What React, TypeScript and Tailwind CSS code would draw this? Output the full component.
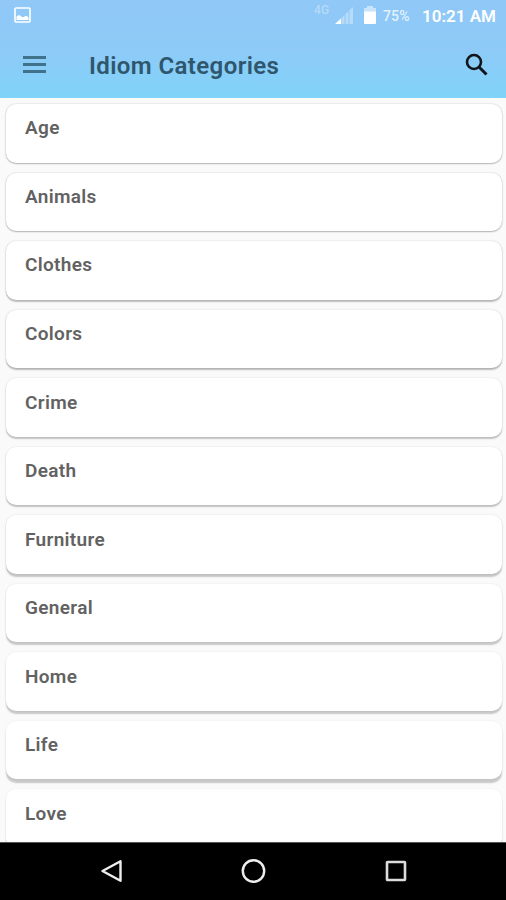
import clsx from "clsx";

const categories = [
  { name: "Age", shadow: "shadow-[0_1px_1.5px_rgba(0,0,0,0.24),0_0_2px_rgba(0,0,0,0.2)]" },
  { name: "Animals", shadow: "shadow-[0_1px_1.5px_rgba(0,0,0,0.25),0_0_2px_rgba(0,0,0,0.18)]" },
  { name: "Clothes", shadow: "shadow-[0_1.5px_1.5px_rgba(0,0,0,0.24),0_0_2px_rgba(0,0,0,0.17)]" },
  { name: "Colors", shadow: "shadow-[0_1.5px_1.5px_rgba(0,0,0,0.25),0_0_2px_rgba(0,0,0,0.15)]" },
  { name: "Crime", shadow: "shadow-[0_2px_1.5px_rgba(0,0,0,0.22),0_0_2px_rgba(0,0,0,0.14)]" },
  { name: "Death", shadow: "shadow-[0_2px_1.5px_rgba(0,0,0,0.22),0_0_2px_rgba(0,0,0,0.13)]" },
  { name: "Furniture", shadow: "shadow-[0_2.5px_1.5px_rgba(0,0,0,0.21),0_0_2px_rgba(0,0,0,0.12)]" },
  { name: "General", shadow: "shadow-[0_2.5px_1.5px_rgba(0,0,0,0.2),0_0_2px_rgba(0,0,0,0.1)]" },
  { name: "Home", shadow: "shadow-[0_3px_1.5px_rgba(0,0,0,0.2),0_0_2px_rgba(0,0,0,0.09)]" },
  { name: "Life", shadow: "shadow-[0_3.5px_1.5px_rgba(0,0,0,0.2),0_0_2px_rgba(0,0,0,0.08)]" },
  { name: "Love", shadow: "shadow-[0_3.5px_1.5px_rgba(0,0,0,0.2),0_0_2px_rgba(0,0,0,0.07)]" },
];

function StatusBar() {
  return (
    <div className="flex h-8 items-start justify-between pl-[14px] pr-[10px] text-white">
      <svg className="mt-[7px] h-4 w-[17px]" viewBox="0 0 17 16" fill="none">
        <rect x="1" y="1" width="15" height="14" rx="1" stroke="white" strokeWidth="1.6" />
        <path d="M2.5 13V9.5c2-1.5 3-1.8 4.5-.3 1.5 1.2 2.5 1.2 3.5.3 1.5-.8 2.5-.3 4 1V13z" fill="white" />
      </svg>
      <div className="flex items-start">
        <span className="mt-[3px] w-[21px] text-[12px] font-medium leading-[14px] text-white/35">4G</span>
        <svg className="mt-[7px] h-[17px] w-[18px]" viewBox="0 0 18 17">
          <path d="M0 17L6 11.5V17z" fill="white" />
          <path d="M6.5 17v-6l3-3v9zM10.5 17V7l3-3v13zM14.5 17V3L18 0v17z" fill="white" opacity="0.35" />
        </svg>
        <svg className="ml-[11px] mt-[6px] h-[18px] w-[12px]" viewBox="0 0 12 18">
          <path d="M3 0h6v2h3v4H0V2h3z" fill="white" opacity="0.5" />
          <path d="M0 5.5h12V17a1 1 0 0 1-1 1H1a1 1 0 0 1-1-1z" fill="white" />
        </svg>
        <span className="ml-[7px] mt-[7px] w-[39px] text-[14px] font-medium leading-[18px] tracking-[0.1px] text-white/75">
          75%
        </span>
        <span className="mt-[6px] text-[17px] font-semibold leading-5">10:21 AM</span>
      </div>
    </div>
  );
}

function Toolbar() {
  return (
    <div className="flex h-[66px] items-center pl-[23px] pr-[18px]">
      <button type="button" aria-label="Menu">
        <svg className="mb-[2px] h-[17px] w-[23px]" viewBox="0 0 23 17" fill="#40728b">
          <path d="M0 0h23v3H0zM0 7h23v3H0zM0 14h23v3H0z" />
        </svg>
      </button>
      <h1 className="ml-[43px] flex-1 pt-px text-[24px] font-semibold leading-8 tracking-[0.4px] text-[#2f566d]">
        Idiom Categories
      </h1>
      <button type="button" aria-label="Search">
        <svg className="mb-[2px] h-[23px] w-[23px]" viewBox="0 0 23 23" fill="none" stroke="#10161a">
          <circle cx="9" cy="9" r="7" strokeWidth="2.6" />
          <path d="M14 14l7.5 7.5" strokeWidth="3" />
        </svg>
      </button>
    </div>
  );
}

function NavBar() {
  return (
    <nav className="flex h-[58px] shrink-0 items-center border-t border-[#555] bg-black pb-[2px] pl-[100px] pr-[99px]">
      <div className="flex flex-1 items-center justify-between">
        <svg className="h-6 w-[23px]" viewBox="0 0 23 24" fill="none" stroke="#eee" strokeWidth="2.4">
          <path d="M20.5 2.2v19.6L2.5 12z" strokeLinejoin="round" />
        </svg>
        <svg className="h-[26px] w-[26px]" viewBox="0 0 26 26" fill="none" stroke="#eee" strokeWidth="2.4">
          <circle cx="12.5" cy="13" r="10.7" />
        </svg>
        <svg className="h-[22px] w-[22px]" viewBox="0 0 22 22" fill="none" stroke="#ddd" strokeWidth="2.6">
          <rect x="2" y="2" width="18" height="18" rx="0.5" />
        </svg>
      </div>
    </nav>
  );
}

export default function App() {
  return (
    <div className="flex h-[900px] w-[506px] flex-col overflow-hidden bg-[#fafafa] font-['Roboto',sans-serif]">
      <header className="h-[98px] shrink-0 bg-linear-to-b from-[#90c8f7] via-[#8ecaf7] to-[#7fd3f9]">
        <StatusBar />
        <Toolbar />
      </header>
      <main className="min-h-0 flex-1 overflow-hidden pl-[5.5px] pr-[4.5px] pt-[6px]">
        <ul className="flex flex-col gap-[10.05px]">
          {categories.map((category) => (
            <li
              key={category.name}
              className={clsx(
                "h-[58.5px] shrink-0 rounded-[10px] bg-white pl-[19.5px] pt-[12.4px]",
                category.shadow
              )}
            >
              <span className="block text-[19px] font-semibold leading-6 tracking-[0.32px] text-[#626262]">
                {category.name}
              </span>
            </li>
          ))}
        </ul>
      </main>
      <NavBar />
    </div>
  );
}
